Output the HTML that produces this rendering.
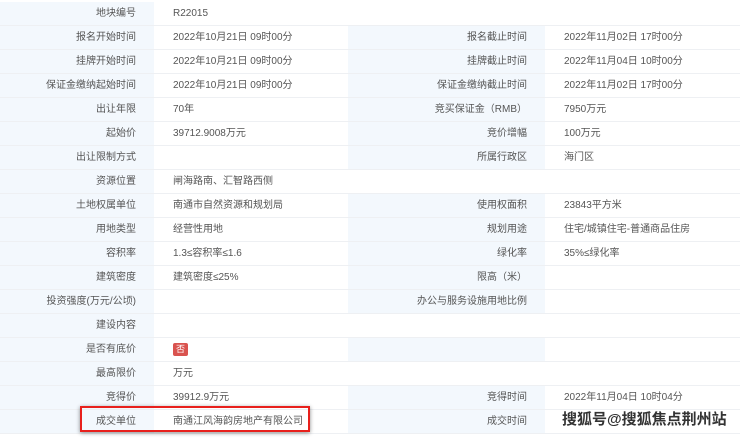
<!DOCTYPE html>
<html><head><meta charset="utf-8"><style>
*{margin:0;padding:0;box-sizing:border-box}
body{width:740px;height:438px;background:#fff;font-family:"Liberation Sans","Noto Sans CJK SC",sans-serif;font-size:10px;color:#555;position:relative;overflow:hidden}
.row{position:absolute;left:0;width:740px;height:24px;border-bottom:1px solid #eef0f3}
.c{position:absolute;top:0;height:23px;line-height:23px;white-space:nowrap}
.l1{left:0;width:154px;background:#f3f8fd;text-align:right;padding-right:18px}
.v1{left:154px;width:194px;padding-left:19px}
.l2{left:348px;width:197px;background:#f3f8fd;text-align:right;padding-right:18px}
.v2{left:545px;width:195px;padding-left:19px}
.vf{left:154px;width:586px;padding-left:19px}
.tag{display:inline-block;background:#d9534f;color:#fff;border-radius:2px;padding:0 3px;line-height:13px;font-size:9px;vertical-align:middle}
.box{position:absolute;left:80px;top:406px;width:230px;height:26px;border:2px solid #e8201c;box-shadow:0 1px 4px rgba(0,0,0,.45)}
.wm{position:absolute;left:562px;top:411px;font-size:15px;line-height:18px;white-space:nowrap;color:#333;font-weight:bold;text-shadow:0 0 2px #fff,0 0 2px #fff,1px 1px 0 #fff,-1px -1px 0 #fff}
</style></head><body>
<div class="row" style="top:2px"><div class="c l1">地块编号</div><div class="c vf">R22015</div></div>
<div class="row" style="top:26px"><div class="c l1">报名开始时间</div><div class="c v1">2022年10月21日 09时00分</div><div class="c l2">报名截止时间</div><div class="c v2">2022年11月02日 17时00分</div></div>
<div class="row" style="top:50px"><div class="c l1">挂牌开始时间</div><div class="c v1">2022年10月21日 09时00分</div><div class="c l2">挂牌截止时间</div><div class="c v2">2022年11月04日 10时00分</div></div>
<div class="row" style="top:74px"><div class="c l1">保证金缴纳起始时间</div><div class="c v1">2022年10月21日 09时00分</div><div class="c l2">保证金缴纳截止时间</div><div class="c v2">2022年11月02日 17时00分</div></div>
<div class="row" style="top:98px"><div class="c l1">出让年限</div><div class="c v1">70年</div><div class="c l2">竞买保证金（RMB）</div><div class="c v2">7950万元</div></div>
<div class="row" style="top:122px"><div class="c l1">起始价</div><div class="c v1">39712.9008万元</div><div class="c l2">竞价增幅</div><div class="c v2">100万元</div></div>
<div class="row" style="top:146px"><div class="c l1">出让限制方式</div><div class="c v1"></div><div class="c l2">所属行政区</div><div class="c v2">海门区</div></div>
<div class="row" style="top:170px"><div class="c l1">资源位置</div><div class="c vf">闸海路南、汇智路西侧</div></div>
<div class="row" style="top:194px"><div class="c l1">土地权属单位</div><div class="c v1">南通市自然资源和规划局</div><div class="c l2">使用权面积</div><div class="c v2">23843平方米</div></div>
<div class="row" style="top:218px"><div class="c l1">用地类型</div><div class="c v1">经营性用地</div><div class="c l2">规划用途</div><div class="c v2">住宅/城镇住宅-普通商品住房</div></div>
<div class="row" style="top:242px"><div class="c l1">容积率</div><div class="c v1">1.3≤容积率≤1.6</div><div class="c l2">绿化率</div><div class="c v2">35%≤绿化率</div></div>
<div class="row" style="top:266px"><div class="c l1">建筑密度</div><div class="c v1">建筑密度≤25%</div><div class="c l2">限高（米）</div><div class="c v2"></div></div>
<div class="row" style="top:290px"><div class="c l1">投资强度(万元/公顷)</div><div class="c v1"></div><div class="c l2">办公与服务设施用地比例</div><div class="c v2"></div></div>
<div class="row" style="top:314px"><div class="c l1">建设内容</div><div class="c vf"></div></div>
<div class="row" style="top:338px"><div class="c l1">是否有底价</div><div class="c v1"><span class="tag">否</span></div><div class="c l2"></div><div class="c v2"></div></div>
<div class="row" style="top:362px"><div class="c l1">最高限价</div><div class="c vf">万元</div></div>
<div class="row" style="top:386px"><div class="c l1">竞得价</div><div class="c v1">39912.9万元</div><div class="c l2">竞得时间</div><div class="c v2">2022年11月04日 10时04分</div></div>
<div class="row" style="top:410px"><div class="c l1">成交单位</div><div class="c v1">南通江风海韵房地产有限公司</div><div class="c l2">成交时间</div><div class="c v2"></div></div>
<div class="box"></div>
<div class="wm">搜狐号@搜狐焦点荆州站</div>
</body></html>
